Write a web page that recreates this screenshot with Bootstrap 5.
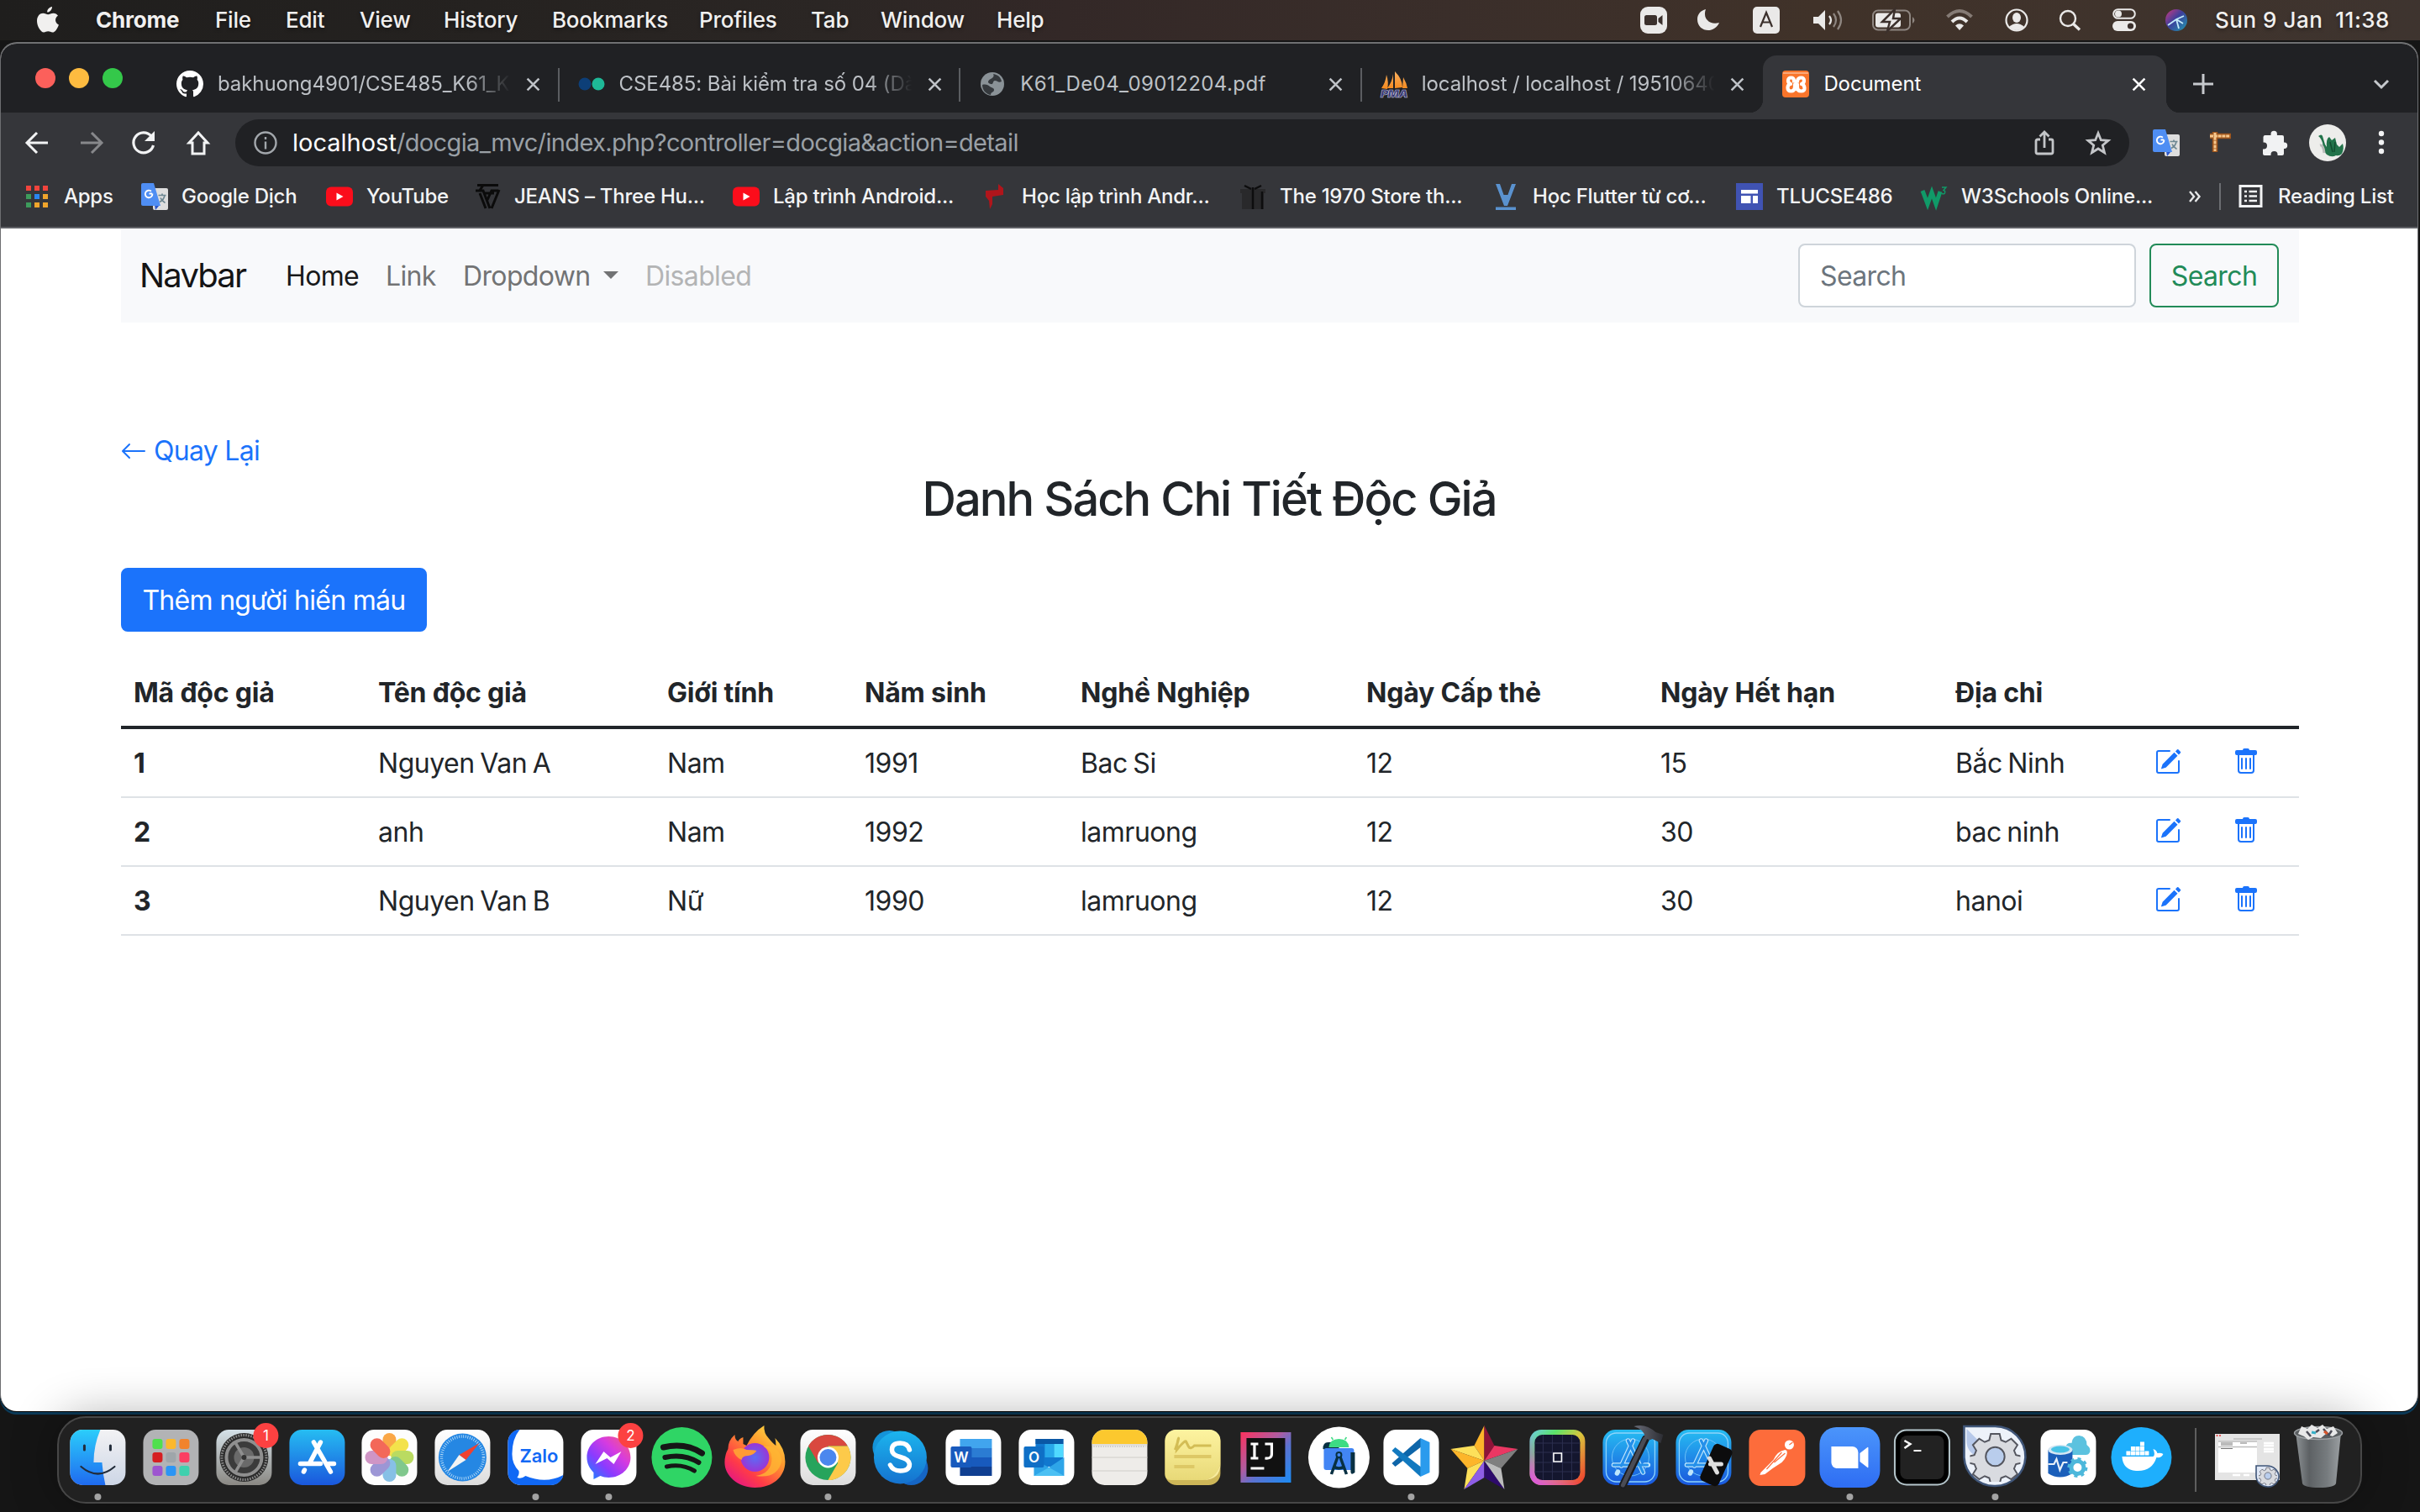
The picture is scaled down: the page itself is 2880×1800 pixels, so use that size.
<!DOCTYPE html>
<html lang="vi">
<head>
<meta charset="utf-8">
<title>Document</title>
<link href="https://cdn.jsdelivr.net/npm/bootstrap@5.3.0/dist/css/bootstrap.min.css" rel="stylesheet">
<style>
html{font-size:32px}
body{width:2880px;height:1800px;overflow:hidden;background:#151515;font-family:Inter,"Liberation Sans",sans-serif;letter-spacing:-.015em;color:#212529;--bs-link-color:#1b73fb}
svg{display:block;flex:none;overflow:visible}
.menubar{height:48px;background:linear-gradient(90deg,#1f1e1d 0,#252220 20%,#2b2624 34%,#332827 44%,#3a2e2a 60%,#403229 75%,#3e342f 100%);color:#f1f0ef;font-size:26px;font-weight:500;letter-spacing:-.008em;line-height:48px;padding-left:44px;white-space:nowrap;text-shadow:0 2px 4px rgba(0,0,0,.4)}
.menu-names{display:grid;grid-template-columns:70px 142px 84px 88px 100px 129px 175px 133px 83px 138px 766px}
.menu-state{display:grid;grid-template-columns:68px 66px 70px 72px 88px 70px 64px 64px 62px 60px auto}
.menu-state span{letter-spacing:.02em}
.win{width:2878px;height:1630px;margin-top:2px;border:1px solid #6d6e71;border-top:2px solid #6f7072;border-bottom:0;border-radius:20px;overflow:hidden;background:#fff;box-shadow:0 1px 0 #000,0 4px 0 #0b3a58}
.tabstrip{height:82px;background:#202124;padding-left:187px;color:#bdc1c6;font-size:24px;position:relative}
.lights{position:absolute;left:41px;top:29px;gap:16px}
.lights i{width:24px;height:24px;border-radius:50%;background:#fc605b}
.lights i:nth-child(2){background:#fdbb40}
.lights i:nth-child(3){background:#34c84a}
.ctab{width:477.6px;height:82px;padding:14px 0 0 22px;position:relative}
.ctab:not(.on):not(.nosep)::after{content:"";position:absolute;right:0;top:29px;width:2px;height:40px;background:#5b5d61}
.ctab .cap{width:352px;margin-left:17px;margin-right:15px;overflow:hidden;white-space:nowrap;line-height:36px;letter-spacing:-.004em}
.ctab .cap.airy{letter-spacing:.018em}
.ctab .fade-end{-webkit-mask-image:linear-gradient(90deg,#000 84%,transparent 99%)}
.ctab.on{color:#fff;padding-left:23px}
.ctab.on::before{content:"";position:absolute;left:0;right:-2px;top:14px;bottom:0;background:#35363a;border-radius:16px 16px 0 0}
.ctab.on>*{position:relative}
.ctab .flare{position:absolute!important;bottom:0;width:16px;height:16px}
.fl-a{left:-16px;background:radial-gradient(circle at 0 0,transparent 16px,#35363a 16.5px)}
.fl-b{right:-18px;background:radial-gradient(circle at 100% 0,transparent 16px,#35363a 16.5px)}
.toolbar{height:72px;background:#35363a;display:grid;align-items:center;padding-left:27px;grid-template-columns:64px 64px 64px 60px 2254px 28px 66px 64px 56px 83px auto}
.omni{height:56px;border-radius:28px;background:#202124;font-size:29px;color:#9aa0a6;padding:0 22px;letter-spacing:-.022em}
.omni b{font-weight:400;color:#fff;letter-spacing:0}
.omni .url{margin-left:18px}
.omni .share{margin-right:37px}
.marks{height:66px;background:#35363a;border-bottom:2px solid #606166;display:grid;grid-template-columns:140px 220px 176px 308px 296px 307px 301px 290px 220px 319px 36px 22px auto;padding:0 0 8px 27px;color:#f3f4f5;font-size:24px;font-weight:500;white-space:nowrap;letter-spacing:-.01em}
.marks>div{display:flex;align-items:center;gap:16px}
.site{width:2592px;margin-left:143px}
.site .navbar{background:#f8f9fb;height:112px;--bs-navbar-brand-font-size:40px}
.site .navbar-brand{width:142px;margin:0 16px 0 -2px;letter-spacing:-.045em;color:#141415}
.site .nav-item:nth-child(1){width:119px}.site .nav-item:nth-child(2){width:92px}.site .nav-item:nth-child(3){width:217px}
.site .nav-link{color:#727374;white-space:nowrap;letter-spacing:-.02em;padding-top:17px;padding-bottom:15px}
.site .dropdown-toggle::after{margin-left:.48em}
.site .nav-link.active{color:#18191a}
.site .nav-link.disabled{color:#b3b4b5}
.site .form-control{width:402px;border:2px solid #ced4da;border-radius:8px;padding:12px 24px;height:76px;line-height:48px;letter-spacing:-.02em}
.site .form-control::placeholder{color:#6c757d}
.site .btn{border-radius:8px;border-width:2px;padding:12px 24px;letter-spacing:inherit;line-height:48px}
.site .btn-outline-success{--bs-btn-color:#228b58;--bs-btn-border-color:#228b58;width:154px;padding:13px 0 11px;letter-spacing:-.02em}
.site .btn-primary{--bs-btn-bg:#1b73fb;--bs-btn-border-color:#1b73fb;width:364px;padding:13px 0 11px;white-space:nowrap;letter-spacing:-.022em}
.backlink{color:#1b73fb;line-height:48px;margin-top:129px;letter-spacing:-.022em}
.backlink svg{margin-left:-1px}
.ttl{font-size:56px;font-weight:500;line-height:67.2px;letter-spacing:-.035em;margin:0 2px 31.8px 0}
.readers{table-layout:fixed;--bs-table-color:#212529;word-spacing:-.06em}
.readers>:not(caption)>*>*{padding:17px 16px 15px;border-bottom:2px solid #dee2e6;height:82px;line-height:48px}
.readers>thead>tr>*{border-bottom:4px solid #212529;height:82px;white-space:nowrap;word-spacing:0;letter-spacing:-.006em}
.readers tr>:first-child{padding-left:15px}
.readers svg{margin:6px 0 0 -1px;fill:#1b73fb}
.dock{margin:6px 0 0 68px;width:2743px;height:104px;border:2px solid #474747;border-radius:34px;background:#212121;padding-left:3px;box-shadow:0 0 56px rgba(0,0,0,.32)}
.dock svg{width:86.86px;height:104px;margin-top:-2px}
.dock svg.wide{width:auto}
.dock text,.bm text{font-family:Inter,sans-serif;letter-spacing:0}
</style>
<script src="https://cdn.jsdelivr.net/npm/bootstrap@5.3.0/dist/js/bootstrap.bundle.min.js"></script>
</head>
<body>
<svg width="0" height="0" class="position-absolute">
<defs>
<linearGradient id="gFind" x2="0" y2="1"><stop stop-color="#2bcdfb"/><stop offset="1" stop-color="#1f6af0"/></linearGradient>
<linearGradient id="gFindR" x2="0" y2="1"><stop stop-color="#f2f2f4"/><stop offset="1" stop-color="#cdd6e6"/></linearGradient>
<linearGradient id="gStore" x2="0" y2="1"><stop stop-color="#26bdf2"/><stop offset="1" stop-color="#1a57dd"/></linearGradient>
<linearGradient id="gSet" x2="0" y2="1"><stop stop-color="#d5e1e8"/><stop offset="1" stop-color="#8a8883"/></linearGradient>
<linearGradient id="gWhite" x2="0" y2="1"><stop stop-color="#fff"/><stop offset="1" stop-color="#dcdcdc"/></linearGradient>
<linearGradient id="gMsg" x1="1" y1="0" x2="0" y2="1"><stop stop-color="#ff5f6f"/><stop offset=".35" stop-color="#d63be0"/><stop offset=".65" stop-color="#8a3bff"/><stop offset="1" stop-color="#0a8cff"/></linearGradient>
<linearGradient id="gFox" x1="1" y1="0" x2=".2" y2="1"><stop stop-color="#fff04a"/><stop offset=".4" stop-color="#ff9a2e"/><stop offset=".75" stop-color="#ff3b47"/><stop offset="1" stop-color="#e31587"/></linearGradient>
<radialGradient id="gFoxB"><stop stop-color="#5b6cf5"/><stop offset="1" stop-color="#9a35d6"/></radialGradient>
<linearGradient id="gSky" x2="0" y2="1"><stop stop-color="#1cb5ee"/><stop offset="1" stop-color="#1572cf"/></linearGradient>
<linearGradient id="gStick" x2="0" y2="1"><stop stop-color="#fdf3a0"/><stop offset="1" stop-color="#e8d978"/></linearGradient>
<linearGradient id="gIj" x1="0" y1="0" x2="1" y2="1"><stop stop-color="#fe315d"/><stop offset=".4" stop-color="#b05ca0"/><stop offset=".6" stop-color="#5c72d0"/><stop offset="1" stop-color="#1a8cf5"/></linearGradient>
<linearGradient id="gRain" x1="0" y1="0" x2="1" y2="1"><stop stop-color="#6fc9ee"/><stop offset=".25" stop-color="#5be36a"/><stop offset=".5" stop-color="#d9c63c"/><stop offset="1" stop-color="#f2352e"/></linearGradient>
<linearGradient id="gRain2" x1="1" y1="0" x2="0" y2="1"><stop offset=".5" stop-color="#e13cf0" stop-opacity="0"/><stop offset="1" stop-color="#d94bf5"/></linearGradient>
<linearGradient id="gZoom" x2="0" y2="1"><stop stop-color="#4b95fb"/><stop offset="1" stop-color="#2e6df3"/></linearGradient>
<linearGradient id="gCan" x2="1" y2="0"><stop stop-color="#8d9295"/><stop offset=".3" stop-color="#5d6164"/><stop offset=".7" stop-color="#777c7f"/><stop offset="1" stop-color="#9b9fa2"/></linearGradient>
<linearGradient id="gPma" x2="0" y2="1"><stop stop-color="#f9b060"/><stop offset="1" stop-color="#f58a1e"/></linearGradient>
<linearGradient id="gSiri" x2="1" y2="1"><stop stop-color="#d03a80"/><stop offset=".45" stop-color="#3d3f9c"/><stop offset="1" stop-color="#1f9cb0"/></linearGradient>
<linearGradient id="gHam" x2="1" y2="0"><stop stop-color="#6a6c78"/><stop offset="1" stop-color="#2c2d33"/></linearGradient>
<symbol id="x" viewBox="0 0 16 16"><path d="M1.500 1.500l13 13M14.500 1.500l-13 13" stroke="currentColor" stroke-width="2.400" fill="none"/></symbol>
<symbol id="gtr" viewBox="0 0 32 32"><rect x="14" y="6" width="18" height="26" rx="2" fill="#dedede"/><path d="M16 26l6 0-5 6z" fill="#2b55c9"/><path d="M2 0h13l8 27H2a2 2 0 0 1-2-2V2a2 2 0 0 1 2-2z" fill="#4f8ef3"/><path d="M13.200 12.500H9.500M13.400 12.600a4.300 4.300 0 1 1-1.500-2.900" stroke="#fff" stroke-width="1.900" fill="none"/><path d="M20.500 14.500h9M25 12.500v2M28 14.500c-.6 3.500-3 6.500-6 8M23 17.500c1 2.500 3 4.500 5.500 6" stroke="#6d8792" stroke-width="1.700" fill="none"/></symbol>
<symbol id="yt" viewBox="0 0 32 32"><rect y="4.500" width="32" height="23" rx="6" fill="#fb0d1b"/><path d="M12.500 11.500l8 4.500-8 4.500z" fill="#fff"/></symbol>
<symbol id="ed" viewBox="0 0 16 16"><path d="M15.502 1.940a.5.5 0 0 1 0 .706L14.459 3.690l-2-2L13.502.646a.5.5 0 0 1 .707 0l1.293 1.293zm-1.750 2.456-2-2L4.939 9.210a.5.5 0 0 0-.121.196l-.805 2.414a.25.25 0 0 0 .316.316l2.414-.805a.5.5 0 0 0 .196-.12l6.813-6.814z"/><path fill-rule="evenodd" d="M1 13.500A1.500 1.500 0 0 0 2.500 15h11a1.500 1.500 0 0 0 1.500-1.500v-6a.5.5 0 0 0-1 0v6a.5.5 0 0 1-.5.5h-11a.5.5 0 0 1-.5-.5v-11a.5.5 0 0 1 .5-.5H9a.5.5 0 0 0 0-1H2.500A1.500 1.500 0 0 0 1 2.500v11z"/></symbol>
<symbol id="tr" viewBox="0 0 16 16"><path d="M5.500 5.500A.5.5 0 0 1 6 6v6a.5.5 0 0 1-1 0V6a.5.5 0 0 1 .5-.5zm2.500 0a.5.5 0 0 1 .5.5v6a.5.5 0 0 1-1 0V6a.5.5 0 0 1 .5-.5zm3 .5a.5.5 0 0 0-1 0v6a.5.5 0 0 0 1 0V6z"/><path fill-rule="evenodd" d="M14.500 3a1 1 0 0 1-1 1H13v9a2 2 0 0 1-2 2H5a2 2 0 0 1-2-2V4h-.5a1 1 0 0 1-1-1V2a1 1 0 0 1 1-1H6a1 1 0 0 1 1-1h2a1 1 0 0 1 1 1h3.500a1 1 0 0 1 1 1v1zM4 4v9a1 1 0 0 0 1 1h6a1 1 0 0 0 1-1V4H4z"/></symbol>
<symbol id="gear" viewBox="-20 -20 40 40"><g fill="#d9dbe0" stroke="#54565f" stroke-width="1.300"><path d="M-3.500-18h7l1.200 5 3.600 1.500 4.400-2.700 5 5-2.700 4.400 1.500 3.600 5 1.200v5l-5 1-1.500 3.600 2.700 4.400-5 4-4.400-2.500-3.600 1.500-1.200 4.500h-7l-1.200-4.500-3.600-1.500-4.400 2.500-5-4 2.700-4.400-1.500-3.600-5-1V0l5-1.200 1.500-3.600-2.700-4.400 5-5 4.400 2.700 3.600-1.500z"/><circle r="7.500" fill="#b9cdec"/></g></symbol>
<symbol id="astore" viewBox="-33 -33 66 66"><path d="M3-20L-11 10M-3-20L15 18M-20 9H6M17 9h4M-15 17l-1 2" stroke-width="5.500" stroke-linecap="round" fill="none"/></symbol>
</defs>
</svg>
<header class="menubar d-flex">
  <nav class="menu-names align-items-center">
    <svg width="26" height="32" viewBox="0 0 26 32" fill="#f1f0ef"><path d="M18 0c.3 3-2.700 6.800-5.800 6.600C11.800 3.600 14.800.3 18 0zM25 10.700c-4.300 2.600-3.800 8.700.9 10.700C24.500 25.800 21.500 30.500 18.500 30.500c-2 0-3-1.200-5.200-1.200s-3.300 1.200-5.200 1.200C4.500 30.500 0 23 0 17 0 11 3.600 7.800 7.200 7.800c2.500 0 4.300 1.500 6 1.500 1.600 0 3.800-1.700 6.600-1.600 2 0 4 1 5.200 3z"/></svg>
    <b>Chrome</b><span>File</span><span>Edit</span><span>View</span><span>History</span><span>Bookmarks</span><span>Profiles</span><span>Tab</span><span>Window</span><span>Help</span>
  </nav>
  <div class="menu-state align-items-center">
    <svg width="32" height="32"><rect width="32" height="32" rx="9" fill="#eae9e8"/><rect x="5" y="10" width="15" height="12" rx="2.500" fill="#3b302c"/><path d="M21.500 14l5-4v12l-5-4z" fill="#3b302c"/></svg>
    <svg width="26" height="26"><path d="M10 0C6 11 14 19 26 16 20 30 0 27 0 12 0 6 4 1.500 10 0z" fill="#eae9e8"/></svg>
    <svg width="32" height="32"><rect width="32" height="32" rx="5" fill="#eae9e8"/><path d="M9 24l7-17 7 17M11.500 18.500h9" stroke="#3b302c" stroke-width="2.200" fill="none"/></svg>
    <svg width="38" height="26" fill="none" stroke-width="2.200"><path d="M2 9h6l8-8v24l-8-8H2z" fill="#eae9e8"/><path d="M21 8q4 5 0 10" stroke="#eae9e8"/><path d="M26 5q6 8 0 16M31 2q8 11 0 22" stroke="#8e8681"/></svg>
    <svg width="52" height="26"><rect x="1" y="1.500" width="44" height="23" rx="6" fill="none" stroke="#8e8681" stroke-width="2"/><rect x="4" y="4.500" width="30" height="17" rx="3" fill="#eae9e8"/><path d="M48 9q5 4 0 8z" fill="#8e8681"/><path d="M27 0L12 15h9l-3 11L34 11h-9z" fill="#eae9e8" stroke="#3b302c" stroke-width="2.500"/></svg>
    <svg width="32" height="26" fill="none" stroke-width="4"><path d="M1.500 9q14.500-14 29 0" stroke="#857b75"/><path d="M7 15q9-9 18 0" stroke="#eae9e8"/><path d="M11 19.500q5-4.500 10 0l-5 5.500z" fill="#eae9e8"/></svg>
    <svg width="28" height="28"><circle cx="14" cy="14" r="12.500" fill="none" stroke="#eae9e8" stroke-width="2.200"/><ellipse cx="14" cy="11" rx="5" ry="6" fill="#eae9e8"/><path d="M5 22q9-8 18 0-9 8-18 0z" fill="#eae9e8"/></svg>
    <svg width="28" height="26" fill="none" stroke="#eae9e8" stroke-width="2.400"><circle cx="11" cy="11" r="9"/><path d="M17.500 17.500l7.500 7" stroke-width="3.400"/></svg>
    <svg width="28" height="28"><rect x="1.200" y="1.200" width="25.600" height="10.600" rx="5.300" fill="none" stroke="#eae9e8" stroke-width="2"/><circle cx="7" cy="6.500" r="4" fill="#eae9e8"/><rect y="15" width="28" height="12" rx="6" fill="#eae9e8"/><circle cx="21.500" cy="21" r="3.600" fill="#3b302c"/></svg>
    <svg width="28" height="28"><circle cx="14" cy="14" r="13" fill="url(#gSiri)"/><path d="M4 20L14 13 23 9M14 13l3 11M14 13l8 5" stroke="#c4ecfa" stroke-width="1.800" fill="none"/></svg>
    <span>Sun 9 Jan&nbsp; 11:38</span>
  </div>
</header>
<main class="win">
  <div class="tabstrip d-flex">
    <div class="lights d-flex"><i></i><i></i><i></i></div>
    <div class="ctab d-flex align-items-center">
      <svg width="32" height="32" viewBox="0 0 16 16" fill="#fff"><path d="M8 0C3.580 0 0 3.580 0 8c0 3.540 2.290 6.530 5.470 7.590.4.070.55-.17.55-.38 0-.19-.01-.82-.01-1.490-2.010.37-2.530-.49-2.690-.94-.09-.23-.48-.94-.82-1.130-.28-.15-.68-.52-.01-.53.63-.01 1.080.58 1.230.82.72 1.210 1.870.87 2.330.66.070-.52.28-.87.51-1.070-1.780-.2-3.640-.89-3.640-3.950 0-.87.31-1.590.82-2.150-.08-.2-.36-1.020.08-2.120 0 0 .67-.21 2.200.82.64-.18 1.320-.27 2-.27s1.360.09 2 .27c1.530-1.040 2.200-.82 2.200-.82.44 1.100.16 1.920.08 2.120.51.56.82 1.270.82 2.150 0 3.070-1.870 3.750-3.650 3.950.29.25.54.73.54 1.480 0 1.070-.01 1.930-.01 2.200 0 .21.15.46.55.38A8.010 8.010 0 0 0 16 8c0-4.420-3.580-8-8-8z"/></svg>
      <span class="cap fade-end">bakhuong4901/CSE485_K61_K</span><svg width="17" height="17"><use href="#x"/></svg>
    </div>
    <div class="ctab d-flex align-items-center">
      <svg width="32" height="32"><circle cx="8" cy="16" r="7.500" fill="#0d3f78"/><circle cx="24" cy="16" r="7.500" fill="#1eb897"/></svg>
      <span class="cap fade-end">CSE485: Bài kiểm tra số 04 (Dà</span><svg width="17" height="17"><use href="#x"/></svg>
    </div>
    <div class="ctab d-flex align-items-center">
      <svg width="32" height="32"><circle cx="16" cy="16" r="14" fill="#8a9297"/><path d="M17 4c6 1 9 4 10 9-4 2-5-1-8-1s-1 5-5 4-4-4 0-6 4-4 3-6zM4 17c4-1 7 0 9 2s5 1 5 4-4 2-4 6C8 28 4 23 4 17z" fill="#35393d"/></svg>
      <span class="cap airy">K61_De04_09012204.pdf</span><svg width="17" height="17"><use href="#x"/></svg>
    </div>
    <div class="ctab nosep d-flex align-items-center">
      <svg width="32" height="32"><path d="M7 5q3 9 1 17L1 21Q6 14 7 5zM17 1q9 9 9 19l-9 1zM15 4v17l-7 0Q14 13 15 4zM27 8q4 7 5 13h-6z" fill="url(#gPma)"/><text x="0" y="31.500" font-size="12" font-weight="900" font-style="italic" fill="#33346f" stroke="#cfd0e0" stroke-width=".5" textLength="32" lengthAdjust="spacingAndGlyphs">PMA</text></svg>
      <span class="cap fade-end">localhost / localhost / 19510640</span><svg width="17" height="17"><use href="#x"/></svg>
    </div>
    <div class="ctab on d-flex align-items-center">
      <i class="flare fl-a"></i><i class="flare fl-b"></i>
      <svg width="32" height="32"><rect width="32" height="32" rx="4" fill="#f9752b"/><path d="M1 3h30" stroke="#fba878" stroke-width="2"/><path d="M14 14.500V12q0-3.500-3.500-3.500T7 12q0 3 3 4-3.500.5-3.500 4.500t4 4 4.500-4.500v-3.500h3V20q0 4.500 4.500 4.500t4-4-3.500-4.500q3-1 3-4 0-3.500-3.500-3.500T18 12v2.500" fill="none" stroke="#fff" stroke-width="4.200" stroke-linejoin="round"/></svg>
      <span class="cap">Document</span><svg width="17" height="17"><use href="#x"/></svg>
    </div>
    <svg width="240" height="82" fill="none" stroke="#c6c9cd" stroke-width="3"><path d="M46 36v24M34 48h24"/><path d="M250 44l8 8 8-8"/></svg>
  </div>
  <div class="toolbar">
    <svg width="30" height="30" fill="none" stroke="#f2f3f4" stroke-width="3"><path d="M29 15H5M16 3L4 15l12 12"/></svg>
    <svg width="30" height="30" fill="none" stroke="#87888b" stroke-width="3"><path d="M4 15h24M17 3l12 12-12 12"/></svg>
    <svg width="30" height="30" fill="none" stroke="#f2f3f4" stroke-width="3.200"><path d="M26.500 18A12 12 0 1 1 24 7"/><path d="M28 1v12H16z" fill="#f2f3f4" stroke="none"/></svg>
    <svg width="32" height="30" fill="none" stroke="#f2f3f4" stroke-width="3"><path d="M16 3L5 15h4v13h14V15h4z"/></svg>
    <div class="omni d-flex align-items-center">
      <svg width="28" height="28" fill="none" stroke="#a2a7ac" stroke-width="2.400"><circle cx="14" cy="14" r="12.500"/><path d="M14 12.500v9M14 7v3"/></svg>
      <span class="flex-grow-1 url"><b>localhost</b>/docgia_mvc/index.php?controller=docgia&amp;action=detail</span>
      <svg width="24" height="32" fill="none" stroke="#c3c5c8" stroke-width="2.800" class="share"><path d="M7 12H4a2 2 0 0 0-2 2v13a2 2 0 0 0 2 2h16a2 2 0 0 0 2-2V14a2 2 0 0 0-2-2h-3M12 22V3M6.500 8.500L12 3l5.500 5.500"/></svg>
      <svg width="30" height="30" fill="none" stroke="#c3c5c8" stroke-width="2.800"><path d="M15 3.500l3.300 8.200 8.700.6-6.700 5.700 2.200 8.700L15 22l-7.500 4.700L9.700 18 3 12.300l8.700-.6z"/></svg>
    </div>
    <span></span>
    <svg width="32" height="32"><use href="#gtr"/></svg>
    <svg width="30" height="30"><path d="M2 7h25M8 2v24" stroke="#a0561c" stroke-width="6.500"/><path d="M2 7h24M8 3v22" stroke="#f6c78d" stroke-width="3" stroke-dasharray="4 .8"/></svg>
    <svg width="30" height="32" fill="#f1f2f3"><path d="M4 7h6.500V5.500a3.700 3.700 0 0 1 7.400 0V7H24a2 2 0 0 1 2 2v6.500h.5a3.700 3.700 0 0 1 0 7.400H26V29a2 2 0 0 1-2 2h-5.500v-1a4 4 0 0 0-8 0v1H3a2 2 0 0 1-2-2v-5.500h1a4 4 0 0 0 0-8H1.500V9A2.300 2.300 0 0 1 4 7z"/></svg>
    <svg width="46" height="46"><circle cx="22" cy="23" r="22" fill="#ededeb"/><path d="M11 15q4-3 5 0l3 10 2 3q-1-10 3-12l3 4 4-3 2 8 3 3 4-4q2 6-1 12-3 3-7 2-5 3-11-1-4-4-5-14-2-6-5-8z" fill="#22734a"/><path d="M13 26q4-1 5 9" stroke="#b9bcb9" stroke-width="3" fill="none"/><path d="M25 22l3 12M31 22l-1 12" stroke="#124d30" stroke-width="1.500"/></svg>
    <svg width="10" height="30" fill="#f2f3f4"><circle cx="3" cy="4" r="3.200"/><circle cx="3" cy="14.500" r="3.200"/><circle cx="3" cy="25" r="3.200"/></svg>
  </div>
  <div class="marks bm">
    <div><svg width="32" height="28"><path d="M3 1h6v6H3zM13 1h6v6h-6zM23 1h6v6h-6z" fill="#f1443d"/><path d="M3 11h6v6H3zM3 21h6v6H3z" fill="#3d9b5c"/><path d="M13 11h6v6h-6z" fill="#2a86f0"/><path d="M23 11h6v6h-6zM13 21h6v6h-6zM23 21h6v6h-6z" fill="#f0a52c"/></svg>Apps</div>
    <div><svg width="32" height="32"><use href="#gtr"/></svg>Google Dịch</div>
    <div><svg width="32" height="32"><use href="#yt"/></svg>YouTube</div>
    <div><svg width="32" height="32" fill="none" stroke="#0b0b0b" stroke-width="3"><path d="M4 2.500h25M2 9h9l8 21M11 2.500l-4 6M7 12l7 18M30 8l-9 22M29 9h-8l-5 11M12 12h12"/></svg>JEANS – Three Hu...</div>
    <div><svg width="32" height="32"><use href="#yt"/></svg>Lập trình Android...</div>
    <div><svg width="32" height="32"><path d="M20 1l6 5v8l-13 2v9l-3 6-1-10-4-5v-7l15-1z" fill="#b0151b"/></svg>Học lập trình Andr...</div>
    <div><svg width="32" height="32"><path d="M3 10h26v21H3zM1 7h30v5H1z" fill="#29292b"/><path d="M16 5v26M6 3l8 4M26 3l-8 4M27 10v21" stroke="#0d0d0e" stroke-width="2.500"/></svg>The 1970 Store th...</div>
    <div><svg width="32" height="32" fill="#5a92cf"><path d="M4 1h5l7 20 7-20h5L18 27h-4zM4 28.500h24v3.500H4z"/><path d="M10 14h12l-6 12z"/></svg>Học Flutter từ cơ...</div>
    <div><svg width="32" height="32"><path fill="#4053b3" d="M0 0h32v32H0z"/><path fill="#fff" d="M6 8h20v4.500H6zM6 15h11.500v9H6zM20 15h6v9h-6z"/></svg>TLUCSE486</div>
    <div><svg width="32" height="32" fill="none"><path d="M2 9l6 16 5-14 5 14 5-15" stroke="#109a68" stroke-width="5"/><path d="M25 5h5l-3 3.500q3 1 1 4-2 1-3-.5" stroke="#109a68" stroke-width="1.400"/></svg>W3Schools Online...</div>
    <div><svg width="14" height="14" fill="none" stroke="#e6e7e8" stroke-width="2.400"><path d="M1 1l5 6-5 6M7.500 1l5 6-5 6"/></svg></div>
    <div><svg width="2" height="32"><path fill="#6b6d71" d="M0 0h2v32H0z"/></svg></div>
    <div><svg width="32" height="30" fill="none" stroke="#f2f3f4" stroke-width="3"><path d="M3 2.500h25v24H3z"/><path d="M8 9h3M8 14.500h3M8 20h3M13.500 9H23M13.500 14.500H23M13.500 20H23" stroke-width="2.400"/></svg>Reading List</div>
  </div>
  <div class="site">
    <nav class="navbar navbar-expand">
      <div class="container-fluid">
        <a class="navbar-brand" href="#">Navbar</a>
        <ul class="navbar-nav me-auto">
          <li class="nav-item"><a class="nav-link active" href="#">Home</a></li>
          <li class="nav-item"><a class="nav-link" href="#">Link</a></li>
          <li class="nav-item"><a class="nav-link dropdown-toggle" href="#">Dropdown</a></li>
          <li class="nav-item"><a class="nav-link disabled">Disabled</a></li>
        </ul>
        <form class="d-flex gap-2"><input class="form-control" type="search" placeholder="Search"><button class="btn btn-outline-success" type="button">Search</button></form>
      </div>
    </nav>
    <a class="backlink d-flex align-items-center text-decoration-none" href="#"><svg width="32" height="32" viewBox="0 0 16 16" fill="#1b73fb"><path fill-rule="evenodd" d="M15 8a.5.5 0 0 0-.5-.5H2.707l3.147-3.146a.5.5 0 1 0-.708-.708l-4 4a.5.5 0 0 0 0 .708l4 4a.5.5 0 0 0 .708-.708L2.707 8.500H14.500A.5.5 0 0 0 15 8z"/></svg><span class="ms-1">Quay Lại</span></a>
    <h3 class="ttl text-center">Danh Sách Chi Tiết Độc Giả</h3>
    <a class="btn btn-primary mt-2" href="#">Thêm người hiến máu</a>
    <table class="table readers mt-3">
      <colgroup><col width="290"><col width="344"><col width="235"><col width="257"><col width="340"><col width="350"><col width="351"><col width="238"><col width="93"><col width="94"></colgroup>
      <thead><tr><th>Mã độc giả</th><th>Tên độc giả</th><th>Giới tính</th><th>Năm sinh</th><th>Nghề Nghiệp</th><th>Ngày Cấp thẻ</th><th>Ngày Hết hạn</th><th>Địa chỉ</th><th></th><th></th></tr></thead>
      <tbody>
        <tr><th>1</th><td>Nguyen Van A</td><td>Nam</td><td>1991</td><td>Bac Si</td><td>12</td><td>15</td><td>Bắc Ninh</td><td><svg width="32" height="32"><use href="#ed"/></svg></td><td><svg width="32" height="32"><use href="#tr"/></svg></td></tr>
        <tr><th>2</th><td>anh</td><td>Nam</td><td>1992</td><td>lamruong</td><td>12</td><td>30</td><td>bac ninh</td><td><svg width="32" height="32"><use href="#ed"/></svg></td><td><svg width="32" height="32"><use href="#tr"/></svg></td></tr>
        <tr><th>3</th><td>Nguyen Van B</td><td>Nữ</td><td>1990</td><td>lamruong</td><td>12</td><td>30</td><td>hanoi</td><td><svg width="32" height="32"><use href="#ed"/></svg></td><td><svg width="32" height="32"><use href="#tr"/></svg></td></tr>
      </tbody>
    </table>
  </div>
</main>
<footer class="dock d-flex position-relative">
  <!-- Finder -->
  <svg viewBox="-43.430 -49 86.860 104"><rect x="-33" y="-33" width="66" height="66" rx="15" fill="url(#gFindR)"/><path d="M3-33H-18a15 15 0 0 0-15 15v36a15 15 0 0 0 15 15H9Q6 20 5 6H-5Q-5-14 3-33z" fill="url(#gFind)"/><path d="M-16-14v5M15-14v5" stroke="#222c3a" stroke-width="3" stroke-linecap="round"/><path d="M-20 11Q0 28 20 11" stroke="#222c3a" stroke-width="2.200" fill="none" stroke-linecap="round"/><circle cy="47" r="4" fill="#a3a3a3"/></svg>
  <!-- Launchpad -->
  <svg viewBox="-43.430 -49 86.860 104"><rect x="-33" y="-33" width="66" height="66" rx="15" fill="#b2b3b5"/><rect x="-22" y="-22" width="12" height="12" rx="3" fill="#4fe04d"/><rect x="-6" y="-22" width="12" height="12" rx="3" fill="#fbb82c"/><rect x="10" y="-22" width="12" height="12" rx="3" fill="#f2832c"/><rect x="-22" y="-6" width="12" height="12" rx="3" fill="#d61f22"/><rect x="-6" y="-6" width="12" height="12" rx="3" fill="#9fa6aa"/><rect x="10" y="-6" width="12" height="12" rx="3" fill="#fb3f62"/><rect x="-22" y="10" width="12" height="12" rx="3" fill="#9d55d0"/><rect x="-6" y="10" width="12" height="12" rx="3" fill="#2b95f5"/><rect x="10" y="10" width="12" height="12" rx="3" fill="#3fd0ae"/></svg>
  <!-- System Preferences -->
  <svg viewBox="-43.430 -49 86.860 104"><rect x="-33" y="-33" width="66" height="66" rx="15" fill="url(#gSet)"/><circle r="29" fill="#2b2b2b"/><circle r="26.500" fill="none" stroke="#8c8c8c" stroke-width="3" stroke-dasharray="1.500 1.500"/><circle r="21" fill="#3b3b3b" stroke="#8f8f8f" stroke-width="4"/><circle r="12" fill="#6a6a6a"/><path d="M0 0H20M0 0L-10 17M0 0L-10-17" stroke="#8f8f8f" stroke-width="3.500"/><circle r="3" fill="#333"/><circle cx="26" cy="-26" r="15" fill="#fc4141"/><text x="26" y="-20.500" font-size="17" fill="#fff" text-anchor="middle">1</text></svg>
  <!-- App Store -->
  <svg viewBox="-43.430 -49 86.860 104"><rect x="-33" y="-33" width="66" height="66" rx="15" fill="url(#gStore)"/><path d="M4-18L-9 7M-4-18L16 17M-20 7.500H4M14 7.500h6M-15 15l-1 2" stroke="#fff" stroke-width="5.500" stroke-linecap="round" fill="none"/></svg>
  <!-- Photos -->
  <svg viewBox="-43.430 -49 86.860 104"><rect x="-33" y="-33" width="66" height="66" rx="15" fill="#fdfdfd"/><g opacity=".86"><rect x="-8" y="-29" width="16" height="27" rx="8" fill="#fa9a2a"/><rect x="-8" y="-29" width="16" height="27" rx="8" fill="#f2de2f" transform="rotate(45)"/><rect x="-8" y="-29" width="16" height="27" rx="8" fill="#b0d648" transform="rotate(90)"/><rect x="-8" y="-29" width="16" height="27" rx="8" fill="#6cc07b" transform="rotate(135)"/><rect x="-8" y="-29" width="16" height="27" rx="8" fill="#74b7e3" transform="rotate(180)"/><rect x="-8" y="-29" width="16" height="27" rx="8" fill="#8d86cf" transform="rotate(225)"/><rect x="-8" y="-29" width="16" height="27" rx="8" fill="#c884bc" transform="rotate(270)"/><rect x="-8" y="-29" width="16" height="27" rx="8" fill="#f2503f" transform="rotate(315)"/></g></svg>
  <!-- Safari -->
  <svg viewBox="-43.430 -49 86.860 104"><rect x="-33" y="-33" width="66" height="66" rx="15" fill="url(#gWhite)"/><circle r="28.500" fill="#2587e3"/><circle r="25" fill="none" stroke="#b7dcf8" stroke-width="3.500" stroke-dasharray=".9 1.720"/><path d="M20-17L-4-3 4 3z" fill="#f0412f"/><path d="M-18 17L-4-3 4 3z" fill="#f3f3f3"/></svg>
  <!-- Zalo -->
  <svg viewBox="-43.430 -49 86.860 104"><rect x="-33" y="-33" width="66" height="66" rx="15" fill="#fff"/><path d="M-19-33a14 15 0 0 0-14 15v36a15 15 0 0 0 15 15h36a15 15 0 0 0 15-12Q12 32-12 22q-5 4-10 2 3-4 2-8-8-8-8-20 0-18 9-29z" fill="#1068f5"/><text y="5.500" x="4" font-size="22" font-weight="600" fill="#1068f5" text-anchor="middle" textLength="46" lengthAdjust="spacingAndGlyphs">Zalo</text><circle cy="47" r="4" fill="#a3a3a3"/></svg>
  <!-- Messenger -->
  <svg viewBox="-43.430 -49 86.860 104"><rect x="-33" y="-33" width="66" height="66" rx="15" fill="#fff"/><path d="M0-25C-15-25-26-14-26 0c0 7 3 13 8 18v8l8-4c3 1 6 2 10 2 15 0 26-11 26-24S15-25 0-25z" fill="url(#gMsg)"/><path d="M-16 8l10-15 8 7 13-7L6 8l-8-7z" fill="#fff"/><circle cx="26" cy="-26" r="15" fill="#fc4141"/><text x="26" y="-20" font-size="17" fill="#fff" text-anchor="middle">2</text><circle cy="47" r="4" fill="#a3a3a3"/></svg>
  <!-- Spotify -->
  <svg viewBox="-43.430 -49 86.860 104"><circle r="36" fill="#2fd565"/><g fill="none" stroke="#161616" stroke-linecap="round"><path d="M-22-12Q4-18 24-5" stroke-width="7"/><path d="M-20 0Q2-5 20 6" stroke-width="6"/><path d="M-18 11Q0 7 15 16" stroke-width="5"/></g></svg>
  <!-- Firefox -->
  <svg viewBox="-43.430 -49 86.860 104"><path d="M-32-10q0-10 8-17 0 6 4 8 1-3 6-5v8l4 2Q-2-30 11-38q-1 9 6 16 5 6 8 8 0-5-1-9 12 12 12 28C36 24 20 36 0 36S-36 22-36 6q0-9 4-16z" fill="url(#gFox)"/><circle cx="0" cy="0" r="17" fill="url(#gFoxB)"/><path d="M-26-9q10-4 16 0 8 0 12 1-3 5-10 6-7 0-8 5-8-4-10-12z" fill="#ff9b35"/><path d="M10-13q10 4 10 14 0 18-19 21 26 4 31-18-2-14-12-17z" fill="#ffb733" opacity=".8"/></svg>
  <!-- Chrome -->
  <svg viewBox="-43.430 -49 86.860 104"><rect x="-33" y="-33" width="66" height="66" rx="15" fill="url(#gWhite)"/><circle r="27" fill="#27a45c"/><path d="M-23.400-13.500A27 27 0 0 1 23.400-13.500H0L-11.700 6.700z" fill="#d9483f"/><path d="M23.400-13.500A27 27 0 0 1 0 27L11.700 6.700 0-13.500z" fill="#fdca4a"/><circle r="12.500" fill="#fff"/><circle r="10" fill="#4b87ee"/><circle cy="47" r="4" fill="#a3a3a3"/></svg>
  <!-- Skype -->
  <svg viewBox="-43.430 -49 86.860 104"><circle cx="-13" cy="-12" r="20" fill="#1493d8"/><circle cx="13" cy="13" r="20" fill="#1565c4"/><circle r="31.500" fill="url(#gSky)"/><path d="M11-9Q9-17 0-17q-10 0-10 8 0 6 10 8.500T11 8q0 8-11 8-9 0-12-7" stroke="#fff" stroke-width="5.500" stroke-linecap="round" fill="none"/></svg>
  <!-- Word -->
  <svg viewBox="-43.430 -49 86.860 104"><rect x="-33" y="-33" width="66" height="66" rx="15" fill="#fff"/><path d="M-16-22h38v11h-38z" fill="#41a5ee"/><path d="M-16-11h38V0h-38z" fill="#2b7cd3"/><path d="M-16 0h38v11h-38z" fill="#185abd"/><path d="M-16 11h38v11h-38z" fill="#103f91"/><rect x="-27" y="-13" width="25" height="25" rx="2" fill="#185abd"/><text x="-14.500" y="6" font-size="17" font-weight="600" fill="#fff" text-anchor="middle">W</text></svg>
  <!-- Outlook -->
  <svg viewBox="-43.430 -49 86.860 104"><rect x="-33" y="-33" width="66" height="66" rx="15" fill="#fff"/><path d="M-13-22h33v33h-33z" fill="#1178cf"/><path d="M-13-22h33v6h-33z" fill="#0a57a5"/><path d="M-2-16H9V0H-2z" fill="#28a8ea"/><path d="M9-16h11V0H9z" fill="#50d9ff"/><path d="M-15 2L3 12 21 0v22h-36z" fill="#2ea5e8"/><path d="M3 12l18 10h-36z" fill="#4cc0f3"/><rect x="-27" y="-13" width="24" height="25" rx="2" fill="#0f6fc6"/><text x="-15" y="6" font-size="17" font-weight="600" fill="#fff" text-anchor="middle">O</text></svg>
  <!-- Notes -->
  <svg viewBox="-43.430 -49 86.860 104"><rect x="-33" y="-33" width="66" height="66" rx="15" fill="#eeece9"/><path d="M-33-16v-2a15 15 0 0 1 15-15h36a15 15 0 0 1 15 15v2z" fill="#fcc82e"/><path d="M-33-15h66M-33 0h66M-33 16h66" stroke="#cfcdc9" stroke-width="1.200"/><path d="M-31-13h62" stroke="#bbb" stroke-width="1.500" stroke-dasharray="1.200 1.600"/></svg>
  <!-- Stickies -->
  <svg viewBox="-43.430 -49 86.860 104"><rect x="-33" y="-33" width="66" height="66" rx="14" fill="#cdb658"/><path d="M-33 20v-40a13 13 0 0 1 13-13h40a13 13 0 0 1 13 13V8Q27 26 12 27h-38q-7 0-7-7z" fill="url(#gStick)"/><path d="M-21-9q5-14 4-14t-2 14Q-9-21-8-19t3 6 7-1h20" stroke="#d3bd55" stroke-width="3" fill="none"/><path d="M-22-1h44M-22 11H2" stroke="#ddc866" stroke-width="4"/><path d="M12 27Q27 26 33 8q0 19-21 19z" fill="#f7eb9c"/></svg>
  <!-- IntelliJ IDEA -->
  <svg viewBox="-43.430 -49 86.860 104"><path d="M-30-30h60v60h-60z" fill="url(#gIj)"/><path d="M-23-23h46v46h-46z" fill="#111"/><path d="M-18-16h9M-13.500-16V1M-18 1h9M-1-16H7V-4q0 6-8 5M-18 13H-2" stroke="#fff" stroke-width="3.200" fill="none"/></svg>
  <!-- Android Studio -->
  <svg viewBox="-43.430 -49 86.860 104"><circle r="36.500" fill="#fff"/><path d="M-19-10q0-8 6-8H0v14z" fill="#083042"/><rect x="-18" y="-11" width="36" height="26" rx="3" fill="#4285f4"/><path d="M-12-12Q-11-22 0-22T12-12z" fill="#3ddc84"/><path d="M-7-21l-2-3M7-21l2-3" stroke="#3ddc84" stroke-width="1.500"/><path d="M14-6h5v24q-5 4-5-1z" fill="#083042"/><path d="M-1-2l-8 22M1-2l8 22M-6 11q6 4 12 0" stroke="#083042" stroke-width="3.500" fill="none"/><circle cy="-3" r="3" fill="#4285f4" stroke="#083042" stroke-width="2"/></svg>
  <!-- VS Code -->
  <svg viewBox="-43.430 -49 86.860 104"><rect x="-33" y="-33" width="66" height="66" rx="15" fill="#fff"/><path d="M11-23L-23 7l4 4 34-26z" fill="#0d65a9"/><path d="M-19-12l-4 4L11 23l4-9z" fill="#1279bf"/><path d="M11-23l11 5v36l-11 5z" fill="#2b9bed"/><circle cy="47" r="4" fill="#a3a3a3"/></svg>
  <!-- StarUML -->
  <svg viewBox="-43.430 -49 86.860 104"><path d="M0-38V4l-12-18z" fill="#fdb52a"/><path d="M0-38V4l12-18z" fill="#8e1439"/><path d="M-40-10l28-4L0 4z" fill="#fde05a"/><path d="M-40-10L0 4l-20 9z" fill="#fdb52a"/><path d="M40-10l-28-4L0 4z" fill="#ea3763"/><path d="M40-10L0 4l20 9z" fill="#7f7f7f"/><path d="M-24 38L0 4l-20 9z" fill="#fde05a"/><path d="M-24 38L0 4v20z" fill="#8e5de6"/><path d="M24 38L0 4v20z" fill="#2d0a6b"/><path d="M24 38L0 4l20 9z" fill="#bdbdbd"/></svg>
  <!-- Color grid utility -->
  <svg viewBox="-43.430 -49 86.860 104"><rect x="-33" y="-33" width="66" height="66" rx="14" fill="url(#gRain)"/><rect x="-33" y="-33" width="66" height="66" rx="14" fill="url(#gRain2)"/><rect x="-27" y="-27" width="54" height="54" rx="9" fill="#14162e"/><path d="M-17-27v54M-6-27v54M6-27v54M17-27v54M-27-17h54M-27-6h54M-27 6h54M-27 17h54" stroke="#2c2f4e" stroke-width="1"/><path d="M-4.500-5h9.500v10h-9.500z" fill="#14162e" stroke="#fff" stroke-width="1.600"/></svg>
  <!-- Xcode -->
  <svg viewBox="-43.430 -49 86.860 104"><rect x="-33" y="-33" width="66" height="66" rx="15" fill="url(#gStore)"/><rect x="-29" y="-29" width="58" height="58" rx="12" fill="none" stroke="#8fd4fa" stroke-width="1.300"/><circle r="22" fill="none" stroke="#6cc0f6" stroke-width="1"/><g stroke="#bfe6fd"><use href="#astore" x="-33" y="-33" width="66" height="66"/></g><g stroke="#2590ea"><path d="M3-20L-11 10M-3-20L15 18M-20 9H20" stroke-width="3.200" stroke-linecap="round"/></g><path d="M18-22L-9 33" stroke="#1c1d22" stroke-width="9" stroke-linecap="round"/><path d="M17-22L-9 33" stroke="#4a4c56" stroke-width="5" stroke-linecap="round"/><path d="M4-37q14-4 26 7l9 3-3 10-10-5q-4 3-9-2 0-9-13-13z" fill="url(#gHam)"/></svg>
  <!-- Simulator -->
  <svg viewBox="-43.430 -49 86.860 104"><rect x="-33" y="-33" width="66" height="66" rx="15" fill="url(#gStore)"/><rect x="-29" y="-29" width="58" height="58" rx="12" fill="none" stroke="#8fd4fa" stroke-width="1.300"/><circle r="22" fill="none" stroke="#6cc0f6" stroke-width="1"/><g stroke="#bfe6fd"><use href="#astore" x="-33" y="-33" width="66" height="66"/></g><g stroke="#2590ea"><path d="M3-20L-11 10M-3-20L15 18M-20 9H20" stroke-width="3.200" stroke-linecap="round"/></g><rect x="3" y="-15" width="24" height="48" rx="5" transform="rotate(24 15 9)" fill="#0c0c0d"/><path d="M7 1l9 17M8 8h13" stroke="#dedede" stroke-width="5" stroke-linecap="round"/></svg>
  <!-- Postman -->
  <svg viewBox="-43.430 -49 86.860 104"><rect x="-33" y="-33" width="67" height="67" rx="14" fill="#fd6c3b"/><circle cx="15" cy="-15" r="5.500" fill="#fff"/><path d="M10-9q-10 2-14 12L-19 18l-1 3 6-1Q-4 12 6 6 14-2 12-8z" fill="#fff"/><path d="M15-15l4-3M10-5L-3 6M6-6L-12 14" stroke="#fd6c3b" stroke-width="1.200"/></svg>
  <!-- Zoom -->
  <svg viewBox="-43.430 -49 86.860 104"><rect x="-36" y="-36" width="72" height="72" rx="20" fill="url(#gZoom)"/><path d="M-22-13H3a7 7 0 0 1 7 7v19h-26a7 7 0 0 1-6-7z" fill="#fff"/><path d="M12-5l9-7q1-1 1 1v22q0 2-1 1l-9-7z" fill="#fff"/><circle cy="47" r="4" fill="#a3a3a3"/></svg>
  <!-- Terminal -->
  <svg viewBox="-43.430 -49 86.860 104"><rect x="-32.500" y="-32.500" width="65" height="65" rx="14" fill="#000" stroke="#b5c6cc" stroke-width="2"/><rect x="-26" y="-26" width="52" height="52" rx="8" fill="#222"/><path d="M-21-20l7 4-7 5" stroke="#fff" stroke-width="2.500" fill="none"/><path d="M-10-8h9" stroke="#fff" stroke-width="2"/></svg>
  <!-- XAMPP manager -->
  <svg viewBox="-43.430 -49 86.860 104"><path d="M-37-37H0A36 36 0 0 1 36 0V0A36 36 0 0 1 0 34H-1A36 36 0 0 1-37 0z" fill="#edf2fa" stroke="#3f5578" stroke-width="2.600"/><path d="M-34-34L0 0h-20Q-34-6-34-20z" fill="#b7c9ea"/><use href="#gear" x="-30" y="-31" width="60" height="60"/><circle cy="47" r="4" fill="#a3a3a3"/></svg>
  <!-- Azure Data Studio -->
  <svg viewBox="-43.430 -49 86.860 104"><rect x="-33" y="-33" width="66" height="66" rx="14" fill="#fff"/><path d="M2-3q-7-3-5-10 2-5 7-4 1-9 9-9 9 1 9 11 6 5 3 10-1 2-4 2z" fill="#5cc2df"/><path d="M-24-9v28q14 9 29 0V-9z" fill="#1b5fba"/><ellipse cx="-9.500" cy="-9" rx="14.500" ry="6" fill="#d4e6f3"/><ellipse cx="-9.500" cy="-9.500" rx="11" ry="4" fill="#48c3e6"/><path d="M-24 8h7l3-6 4 13 4-9h5" stroke="#e8f0f8" stroke-width="2.200" fill="none"/><circle cx="11" cy="12" r="7.500" fill="#fff" stroke="#4db8db" stroke-width="5"/><circle cx="11" cy="12" r="10.500" fill="none" stroke="#4db8db" stroke-width="3" stroke-dasharray="4 4.200"/></svg>
  <!-- Docker -->
  <svg viewBox="-43.430 -49 86.860 104"><circle r="36" fill="#1eaffd"/><path d="M-23-1h37q3-2 0-9 4 1 5 5 4-1 7 1-2 5-8 4-5 16-22 16-18 0-19-17z" fill="#fff"/><path d="M-18-7.500h5v5h-5zM-12.500-7.500h5v5h-5zM-7-7.500h5v5h-5zM-1.500-7.500h5v5h-5zM4-7.500h5v5H4zM-12.500-13h5v5h-5zM-7-13h5v5h-5zM-1.500-13h5v5h-5zM-1.500-18.500h5v5h-5z" fill="#fff"/></svg>
  <!-- Divider, minimized window and trash -->
  <svg class="wide" viewBox="0 -49 216 104"><path d="M20-35h2v76h-2z" fill="#5e5e5e"/>
    <path d="M44-28h77v55H44z" fill="#e4e4e4"/><path d="M48-19h46v37H48z" fill="#fff"/><path d="M48-19h46M48-12.500h46M66-22h34" stroke="#bdbdbd" stroke-width="1.600"/><path d="M51-17h14M51-15h14M51-10.500h14M74-17h8" stroke="#777" stroke-width="1"/><path d="M102-17h12M102-14h12M102-10h12M102-7h12M65 21h9M78 21h7" stroke="#fff" stroke-width="2.500"/><circle cx="46.500" cy="-26" r="1" fill="#e33"/><circle cx="50" cy="-26" r="1" fill="#e33"/>
    <path d="M93 10h13a14 13 0 0 1 14 13a13 13 0 0 1-13 12a14 13 0 0 1-14-13z" fill="#dfe7f5" stroke="#3f5578" stroke-width="1.600"/><use href="#gear" x="96" y="11" width="22" height="22"/>
    <path d="M140-30l8 61q2 5 20 5t20-5l6-61z" fill="url(#gCan)"/><ellipse cx="167" cy="-29" rx="28.500" ry="7.500" fill="#5a5e61" stroke="#9da1a4" stroke-width="1.500"/><path d="M143-28l4-9 7 3 5-5 7 4 6-4 5 5 8-3 5 8-6 4-8-3-6 5-9-1-6 3-5-4z" fill="#e8e8e8"/><path d="M153-31l5 6M173-34l6 7M164-30l4-3M183-32l-4 6" stroke="#4a4a55" stroke-width="2.500"/><path d="M159-30l5 1" stroke="#35b0c8" stroke-width="3"/><path d="M174-31l4 3" stroke="#d8552c" stroke-width="3"/></svg>
</footer>
</body>
</html>
